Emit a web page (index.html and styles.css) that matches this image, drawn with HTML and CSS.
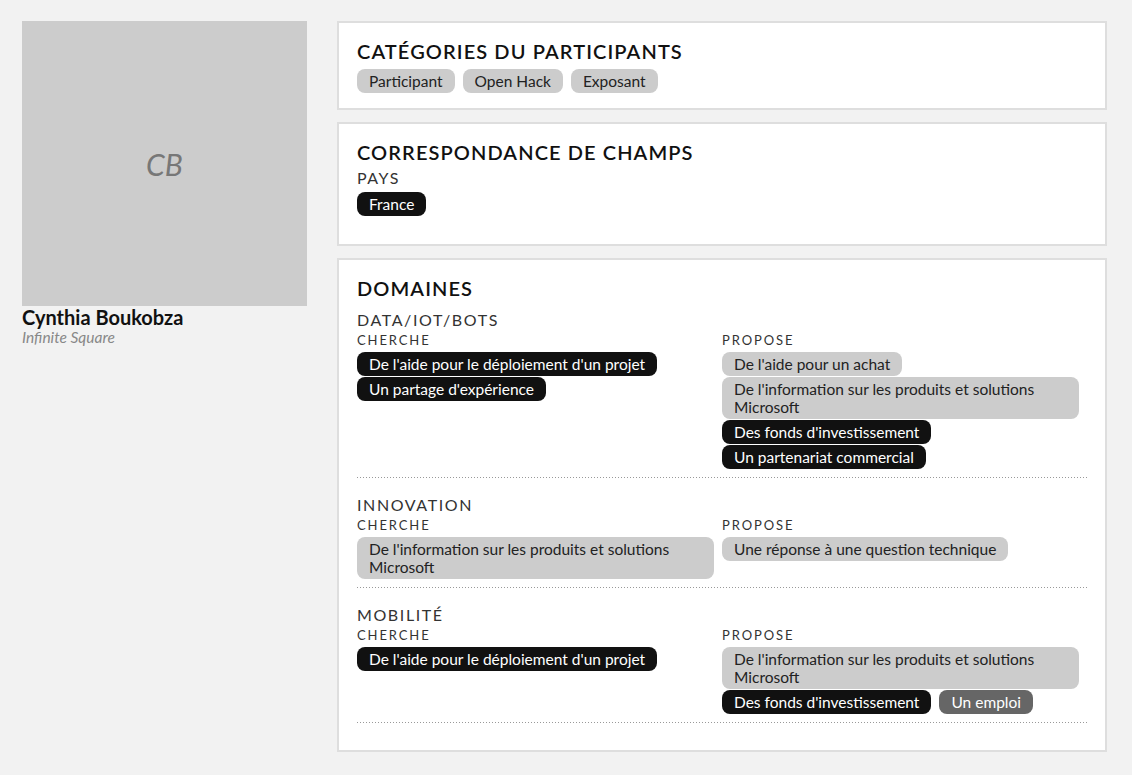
FILE: index.html
```html
<!DOCTYPE html>
<html lang="fr">
<head>
<meta charset="utf-8">
<title>Cynthia Boukobza</title>
<link rel="stylesheet" href="styles.css">
</head>
<body>
<div class="page">
  <aside class="profile">
    <div class="avatar"><span>CB</span></div>
    <div class="name">Cynthia Boukobza</div>
    <div class="company">Infinite Square</div>
  </aside>
  <main class="cards">
    <section class="card card-cats">
      <h2 class="card-title">Catégories du participants</h2>
      <div class="tags tags-cats">
        <span class="tag tag-gray">Participant</span>
        <span class="tag tag-gray">Open Hack</span>
        <span class="tag tag-gray">Exposant</span>
      </div>
    </section>
    <section class="card card-fields">
      <h2 class="card-title">Correspondance de champs</h2>
      <div class="field-label">Pays</div>
      <div class="tags tags-field">
        <span class="tag tag-black">France</span>
      </div>
    </section>
    <section class="card card-domains">
      <h2 class="card-title">Domaines</h2>
      <div class="domain">
        <div class="domain-name">Data/IoT/Bots</div>
        <div class="domain-cols">
          <div class="col">
            <div class="col-label">Cherche</div>
            <div class="tags">
              <span class="tag tag-black">De l'aide pour le déploiement d'un projet</span>
              <span class="tag tag-black">Un partage d'expérience</span>
            </div>
          </div>
          <div class="col">
            <div class="col-label">Propose</div>
            <div class="tags">
              <span class="tag tag-gray">De l'aide pour un achat</span>
              <span class="tag tag-gray">De l'information sur les produits et solutions Microsoft</span>
              <span class="tag tag-black">Des fonds d'investissement</span>
              <span class="tag tag-black">Un partenariat commercial</span>
            </div>
          </div>
        </div>
      </div>
      <div class="domain">
        <div class="domain-name">Innovation</div>
        <div class="domain-cols">
          <div class="col">
            <div class="col-label">Cherche</div>
            <div class="tags">
              <span class="tag tag-gray">De l'information sur les produits et solutions Microsoft</span>
            </div>
          </div>
          <div class="col">
            <div class="col-label">Propose</div>
            <div class="tags">
              <span class="tag tag-gray">Une réponse à une question technique</span>
            </div>
          </div>
        </div>
      </div>
      <div class="domain">
        <div class="domain-name">Mobilité</div>
        <div class="domain-cols">
          <div class="col">
            <div class="col-label">Cherche</div>
            <div class="tags">
              <span class="tag tag-black">De l'aide pour le déploiement d'un projet</span>
            </div>
          </div>
          <div class="col">
            <div class="col-label">Propose</div>
            <div class="tags">
              <span class="tag tag-gray">De l'information sur les produits et solutions Microsoft</span>
              <span class="tag tag-black">Des fonds d'investissement</span>
              <span class="tag tag-dark">Un emploi</span>
            </div>
          </div>
        </div>
      </div>
    </section>
  </main>
</div>
</body>
</html>
```

FILE: styles.css
```css
* { box-sizing: border-box; }

html, body {
  margin: 0;
  padding: 0;
  background: #f2f2f2;
  font-family: Lato, "Open Sans", "Liberation Sans", sans-serif;
  color: #111;
}

.page {
  display: flex;
  align-items: flex-start;
  gap: 30px;
  padding: 21px 0 0 22px;
}

.profile {
  width: 285px;
  flex: none;
}

.avatar {
  width: 285px;
  height: 285px;
  background: #cccccc;
  display: flex;
  align-items: center;
  justify-content: center;
}

.avatar span {
  font-style: italic;
  font-size: 30px;
  color: #777;
}

.name {
  margin-top: 0;
  font-size: 20px;
  font-weight: 700;
  line-height: 23px;
  color: #111;
}

.company {
  font-size: 15.5px;
  font-style: italic;
  color: #888;
  line-height: 17px;
}

.cards {
  width: 770px;
  flex: none;
  display: flex;
  flex-direction: column;
  gap: 12px;
}

.card {
  background: #fff;
  border: 2px solid #dedede;
  padding: 16px 18px 16px;
}

.card-cats { padding-bottom: 14px; }
.card-fields { padding-bottom: 27px; }
.card-domains { padding-bottom: 27px; }

.card-title {
  margin: 0;
  font-size: 20px;
  line-height: 24px;
  font-weight: 600;
  letter-spacing: 1.1px;
  text-transform: uppercase;
  color: #111;
}

.tags {
  display: flex;
  flex-wrap: wrap;
  align-items: flex-start;
}

.tags-cats { margin-top: 6px; }
.tags-field { margin-top: 5px; }

.tag {
  display: block;
  font-size: 15.5px;
  line-height: 18px;
  padding: 3px 12px;
  border-radius: 8px;
  margin: 0 8px 1px 0;
}

.tag-gray { background: #cccccc; color: #222; }
.tag-black { background: #111; color: #fff; }
.tag-dark { background: #666; color: #fff; }

.field-label {
  margin-top: 4px;
  font-size: 16px;
  line-height: 19px;
  letter-spacing: 1.5px;
  text-transform: uppercase;
  color: #333;
}

.domain {
  margin-top: 17px;
  padding-bottom: 8px;
  background-image: linear-gradient(to right, #999 1px, transparent 1px);
  background-size: 3px 1px;
  background-repeat: repeat-x;
  background-position: left bottom;
}

.domain:first-of-type { margin-top: 10px; }

.domain-name {
  font-size: 16px;
  line-height: 19px;
  letter-spacing: 1.6px;
  text-transform: uppercase;
  color: #333;
}

.domain-cols {
  display: grid;
  grid-template-columns: 1fr 1fr;
}

.col-label {
  margin-top: 3px;
  font-size: 13px;
  line-height: 17px;
  letter-spacing: 1.9px;
  text-transform: uppercase;
  color: #333;
  margin-bottom: 3px;
}
```
